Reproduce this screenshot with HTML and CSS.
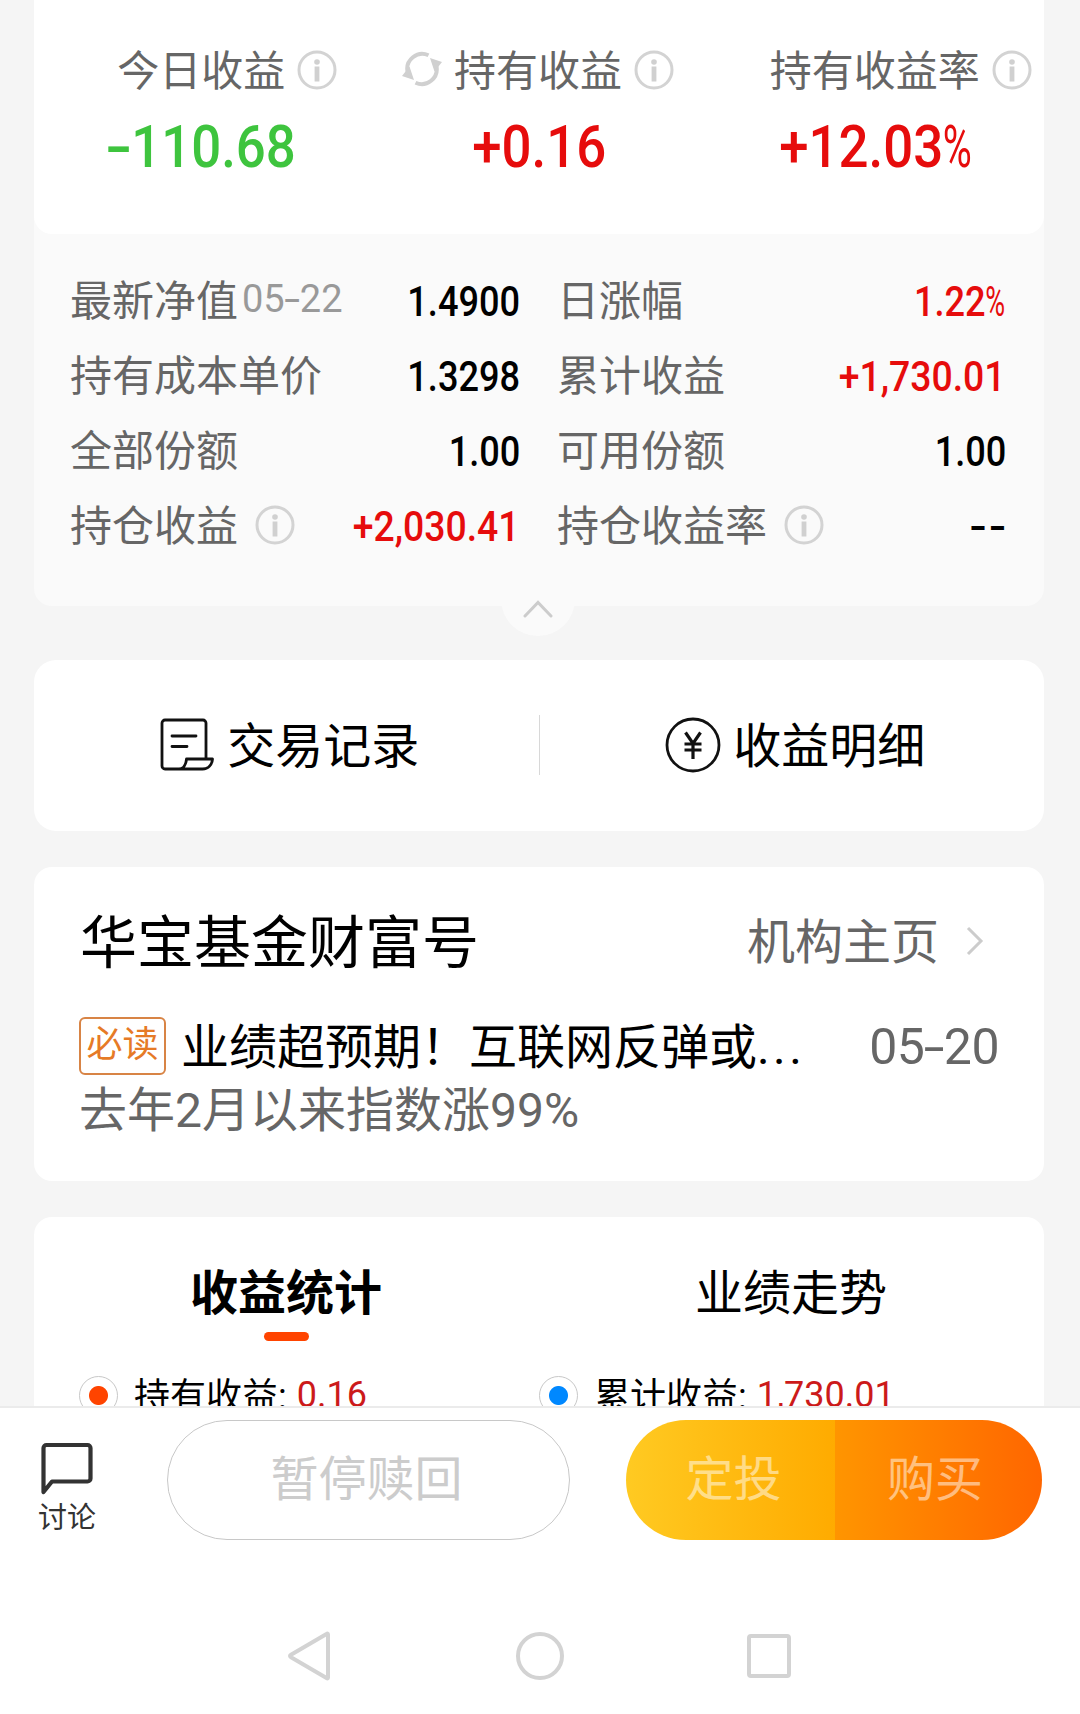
FILE: index.html
```html
<!DOCTYPE html>
<html lang="zh-CN">
<head>
    <meta charset="UTF-8">
    <meta name="viewport" content="width=device-width, initial-scale=1.0">
    <title>基金持仓详情</title>
    <link rel="stylesheet" href="styles.css">
</head>
<body>
    <svg class="symbols" width="0" height="0">
        <symbol id="icon-info" viewBox="0 0 40 40">
            <circle cx="20" cy="20" r="18" fill="none" stroke="#d3d3d3" stroke-width="3"/>
            <circle cx="20" cy="12" r="2.8" fill="#d0d0d0"/>
            <rect x="17.6" y="16.5" width="4.8" height="15" fill="#d0d0d0"/>
        </symbol>
    </svg>

    <div class="page">
        <div class="holding-card">
            <div class="summary">
                <div class="summary-item">
                    <div class="summary-label">今日收益<svg class="info-icon"><use href="#icon-info"/></svg></div>
                    <div class="summary-value green"><span class="num"><span class="minus">-</span>110.68</span></div>
                </div>
                <div class="summary-item">
                    <div class="summary-label">
                        <svg class="refresh-icon" viewBox="0 0 40 36">
                            <path d="M26.5 4.3A15 15 0 0 0 5.6 21M13.5 31.7A15 15 0 0 0 34.4 15" fill="none" stroke="#d0d0d0" stroke-width="4"/>
                            <path d="M0 25L7.5 15.5L12 29ZM40 11L32.5 20.5L28 7Z" fill="#d0d0d0"/>
                        </svg>持有收益<svg class="info-icon"><use href="#icon-info"/></svg>
                    </div>
                    <div class="summary-value red"><span class="num">+0.16</span></div>
                </div>
                <div class="summary-item">
                    <div class="summary-label">持有收益率<svg class="info-icon"><use href="#icon-info"/></svg></div>
                    <div class="summary-value red"><span class="num">+12.03<span class="percent">%</span></span></div>
                </div>
            </div>

            <div class="detail-grid">
                <div class="detail-row">
                    <span class="detail-label">最新净值<span class="detail-date">05<span class="dash">-</span>22</span></span>
                    <span class="detail-value num">1.4900</span>
                </div>
                <div class="detail-row">
                    <span class="detail-label">日涨幅</span>
                    <span class="detail-value num red">1.22<span class="percent">%</span></span>
                </div>
                <div class="detail-row">
                    <span class="detail-label">持有成本单价</span>
                    <span class="detail-value num">1.3298</span>
                </div>
                <div class="detail-row">
                    <span class="detail-label">累计收益</span>
                    <span class="detail-value num red signed">+1,730.01</span>
                </div>
                <div class="detail-row">
                    <span class="detail-label">全部份额</span>
                    <span class="detail-value num">1.00</span>
                </div>
                <div class="detail-row">
                    <span class="detail-label">可用份额</span>
                    <span class="detail-value num">1.00</span>
                </div>
                <div class="detail-row">
                    <span class="detail-label">持仓收益<svg class="info-icon"><use href="#icon-info"/></svg></span>
                    <span class="detail-value num red signed">+2,030.41</span>
                </div>
                <div class="detail-row">
                    <span class="detail-label">持仓收益率<svg class="info-icon"><use href="#icon-info"/></svg></span>
                    <span class="detail-value num empty">--</span>
                </div>
            </div>

            <div class="collapse-button">
                <svg width="30" height="20" viewBox="0 0 30 20">
                    <path d="M2 17L15 3.5L28 17" fill="none" stroke="#ccc" stroke-width="3" stroke-linecap="round"/>
                </svg>
            </div>
        </div>

        <div class="card shortcuts">
            <div class="shortcut">
                <svg width="54" height="54" viewBox="0 0 54 54" fill="none" stroke="#111" stroke-width="2.8" stroke-linejoin="round" stroke-linecap="round">
                    <path d="M46 41V5a3 3 0 0 0-3-3H5a3 3 0 0 0-3 3V48a3 3 0 0 0 3 3H42.500C48.500 51 52 46.500 52.500 41H26.500C26 46 23.500 51 19 51"/>
                    <path d="M12 18H36M12 28.500H27"/>
                </svg>
                <span>交易记录</span>
            </div>
            <div class="shortcut">
                <svg width="56" height="56" viewBox="0 0 56 56" fill="none" stroke="#111" stroke-width="2.8">
                    <circle cx="28" cy="28" r="26"/>
                    <path d="M20.5 15.5L28 26.5L35.5 15.5M28 26.5V42M19.5 27H36.5M19.5 33H36.5" stroke-width="3.2"/>
                </svg>
                <span>收益明细</span>
            </div>
        </div>

        <div class="card wealth">
            <div class="wealth-header">
                <div class="wealth-title">华宝基金财富号</div>
                <div class="wealth-link">机构主页
                    <svg width="18" height="32" viewBox="0 0 18 32">
                        <path d="M2 3L15 16L2 29" fill="none" stroke="#ccc" stroke-width="3"/>
                    </svg>
                </div>
            </div>
            <div class="article">
                <span class="badge">必读</span>
                <span class="article-title">业绩超预期！互联网反弹或<span class="dots">...</span></span>
                <span class="article-date">05<span class="dash">-</span>20</span>
            </div>
            <div class="article-summary">去年2月以来指数涨99%</div>
        </div>

        <div class="card stats">
            <div class="tabs">
                <div class="tab active">收益统计</div>
                <div class="tab">业绩走势</div>
            </div>
            <div class="legend">
                <div class="legend-item">
                    <span class="legend-dot orange"></span>
                    <span class="legend-name">持有收益:</span>
                    <span class="legend-value">0.16</span>
                </div>
                <div class="legend-item">
                    <span class="legend-dot blue"></span>
                    <span class="legend-name">累计收益:</span>
                    <span class="legend-value">1,730.01</span>
                </div>
            </div>
        </div>
    </div>

    <div class="action-bar">
        <div class="discuss">
            <svg width="54" height="54" viewBox="0 0 54 54">
                <path d="M3.500 50V6a3 3 0 0 1 3-3H47.500a3 3 0 0 1 3 3V36.500a3 3 0 0 1-3 3H12Z" fill="none" stroke="#333" stroke-width="4.2" stroke-linejoin="round"/>
            </svg>
            <span>讨论</span>
        </div>
        <div class="redeem-button">暂停赎回</div>
        <div class="buy-group">
            <div class="invest-button">定投</div>
            <div class="buy-button">购买</div>
        </div>
    </div>

    <div class="system-nav">
        <svg width="50" height="50" viewBox="0 0 50 50">
            <path d="M42 3.5V46.5Q42 48 40.5 47L5 26.2Q3 25 5 23.8L40.5 3Q42 2 42 3.5Z"/>
        </svg>
        <svg width="50" height="50" viewBox="0 0 50 50"><circle cx="25" cy="25" r="22"/></svg>
        <svg width="50" height="50" viewBox="0 0 50 50"><rect x="5" y="5" width="40" height="40" rx="2"/></svg>
    </div>
</body>
</html>
```

FILE: styles.css
```css
* {
    box-sizing: border-box;
}
body {
    margin: 0;
    font-family: Roboto, "Noto Sans CJK SC", sans-serif;
    background-color: #fff;
    color: #000;
}
svg {
    flex-shrink: 0;
}
.symbols {
    display: none;
}
.page {
    height: 1406px;
    padding: 0 36px 0 34px;
    overflow: hidden;
    background-color: #f5f5f5;
}
.card {
    background-color: #fff;
    border-radius: 18px;
}
.red {
    color: #e60c0c;
}
.green {
    color: #3ec43e;
}
/* condensed digits */
.num {
    display: inline-block;
    font-weight: 500;
    white-space: nowrap;
    transform: scaleX(0.88);
}
.percent {
    display: inline-block;
    font-weight: 400;
    transform: scaleX(0.75);
    transform-origin: left;
    margin-right: -0.18em;
}
.info-icon {
    width: 40px;
    height: 40px;
}

/* holdings */
.holding-card {
    position: relative;
    height: 606px;
    margin-bottom: 54px;
    background-color: #fafafa;
    border-radius: 0 0 18px 18px;
}
.summary {
    display: grid;
    grid-template-columns: repeat(3, 1fr);
    height: 234px;
    padding-top: 42px;
    background-color: #fff;
    border-radius: 0 0 18px 18px;
}
.summary-label {
    display: flex;
    justify-content: center;
    align-items: center;
    height: 50px;
    padding-right: 2px;
    font-size: 42px;
    color: #666;
    white-space: nowrap;
}
.summary-label .info-icon {
    margin: 5px -52px 0 12px;
}
.refresh-icon {
    width: 40px;
    height: 36px;
    margin: 4px 12px 0 -52px;
}
.summary-value {
    margin-top: 20px;
    text-align: center;
    font-size: 60px;
    line-height: 70px;
}
.minus {
    display: inline-block;
    transform: scaleX(1.5);
    margin-right: 4px;
}
.detail-grid {
    display: grid;
    grid-template-columns: 450px 449px;
    column-gap: 37px;
    padding: 28px 36px 0;
}
.detail-row {
    display: flex;
    justify-content: space-between;
    align-items: center;
    height: 75px;
    font-size: 42px;
}
.detail-label {
    display: flex;
    align-items: center;
    padding-bottom: 5px;
    color: #666;
}
.detail-label .info-icon {
    margin: 5px 0 0 17px;
}
.detail-date {
    margin-left: 4px;
    padding-top: 3px;
    font-size: 38px;
    color: #999;
}
.dash {
    display: inline-block;
    margin: 0 0.06em;
    transform: scaleX(1.5);
}
.detail-value {
    padding-top: 4px;
    transform: scaleX(0.86);
    transform-origin: right;
}
.signed {
    transform: scaleX(0.89);
}
.empty {
    letter-spacing: 2px;
    transform: scaleX(1.2);
    margin-right: -3px;
}
.collapse-button {
    position: absolute;
    left: 467px;
    bottom: -30px;
    width: 74px;
    height: 74px;
    padding-top: 37px;
    border-radius: 50%;
    background-color: #fafafa;
    text-align: center;
    line-height: 0;
}

/* shortcuts */
.shortcuts {
    display: flex;
    align-items: center;
    height: 171px;
    margin-bottom: 36px;
    padding-bottom: 2px;
    border-radius: 22px;
}
.shortcut {
    flex: 1;
    display: flex;
    justify-content: center;
    align-items: center;
    gap: 13px;
    height: 60px;
    padding-left: 7px;
    font-size: 48px;
}
.shortcut span {
    padding-bottom: 6px;
}
.shortcut + .shortcut {
    gap: 12px;
    border-left: 1px solid #d8d8d8;
}

/* wealth account */
.wealth {
    height: 314px;
    margin-bottom: 36px;
    padding: 36px 45px 0;
}
.wealth-header {
    display: flex;
    justify-content: space-between;
    align-items: center;
    height: 70px;
    padding-right: 15px;
}
.wealth-title {
    margin-left: 1px;
    font-size: 57px;
}
.wealth-link {
    display: flex;
    align-items: center;
    gap: 27px;
    font-size: 48px;
    color: #666;
}
.wealth-link svg {
    margin-top: 6px;
}
.article {
    display: flex;
    align-items: center;
    height: 60px;
    margin-top: 43px;
    white-space: nowrap;
}
.badge {
    width: 87px;
    height: 58px;
    margin-right: 15px;
    border: 2px solid #d88445;
    border-radius: 6px;
    font-size: 36px;
    line-height: 53px;
    text-align: center;
    color: #e67a26;
}
.article-title {
    flex: 1;
    padding-top: 3px;
    font-size: 48px;
    line-height: 58px;
}
.dots {
    letter-spacing: 3.4px;
}
.article-date {
    padding-top: 1px;
    font-size: 50px;
    letter-spacing: -0.5px;
    color: #666;
}
.article-summary {
    font-size: 48px;
    line-height: 70px;
    color: #666;
}

/* statistics */
.stats {
    height: 400px;
    padding-top: 42px;
}
.tabs {
    display: flex;
}
.tab {
    flex: 1;
    display: flex;
    flex-direction: column;
    align-items: center;
    height: 84px;
    padding-right: 1px;
    font-size: 48px;
    line-height: 70px;
}
.tab.active {
    font-weight: bold;
}
.tab.active::after {
    content: "";
    width: 45px;
    height: 9px;
    margin-top: 3px;
    border-radius: 5px;
    background-color: #ff4400;
}
.legend {
    display: flex;
    padding: 32px 45px 0;
}
.legend-item {
    display: flex;
    align-items: center;
    width: 460px;
    height: 40px;
    font-size: 36px;
}
.legend-dot {
    width: 39px;
    height: 39px;
    margin-right: 16px;
    border: 1px solid #c8c8c8;
    border-radius: 50%;
}
.orange {
    background: radial-gradient(#ff4400 9px, #fff 10px);
}
.blue {
    background: radial-gradient(#0088ff 9px, #fff 10px);
}
.legend-name {
    padding-bottom: 4px;
}
.legend-value {
    margin-left: 10px;
    color: #cc1a1a;
}

/* bottom actions */
.action-bar {
    display: flex;
    height: 154px;
    padding: 12px 38px 0;
    border-top: 2px solid #ebebeb;
}
.discuss {
    display: flex;
    flex-direction: column;
    align-items: center;
    width: 58px;
    margin-right: 71px;
    padding-top: 22px;
    font-size: 29px;
    line-height: 44px;
    color: #333;
}
.redeem-button {
    width: 403px;
    height: 120px;
    margin-right: 56px;
    padding-right: 4px;
    border: 1px solid #c8c8c8;
    border-radius: 60px;
    font-size: 48px;
    line-height: 117px;
    text-align: center;
    color: #ccc;
}
.buy-group {
    display: flex;
    width: 416px;
    height: 120px;
    border-radius: 60px;
    overflow: hidden;
    font-size: 48px;
    line-height: 120px;
    text-align: center;
    color: rgba(255, 255, 255, 0.5);
}
.invest-button {
    width: 209px;
    padding-left: 6px;
    background: linear-gradient(90deg, #ffca22, #ffab00);
}
.buy-button {
    flex: 1;
    padding-right: 7px;
    background: linear-gradient(90deg, #ff9500, #ff6600);
}
.system-nav {
    display: flex;
    justify-content: center;
    align-items: center;
    gap: 179px;
    height: 154px;
    padding-top: 38px;
    fill: none;
    stroke: #d3d3d3;
    stroke-width: 4;
}
```
